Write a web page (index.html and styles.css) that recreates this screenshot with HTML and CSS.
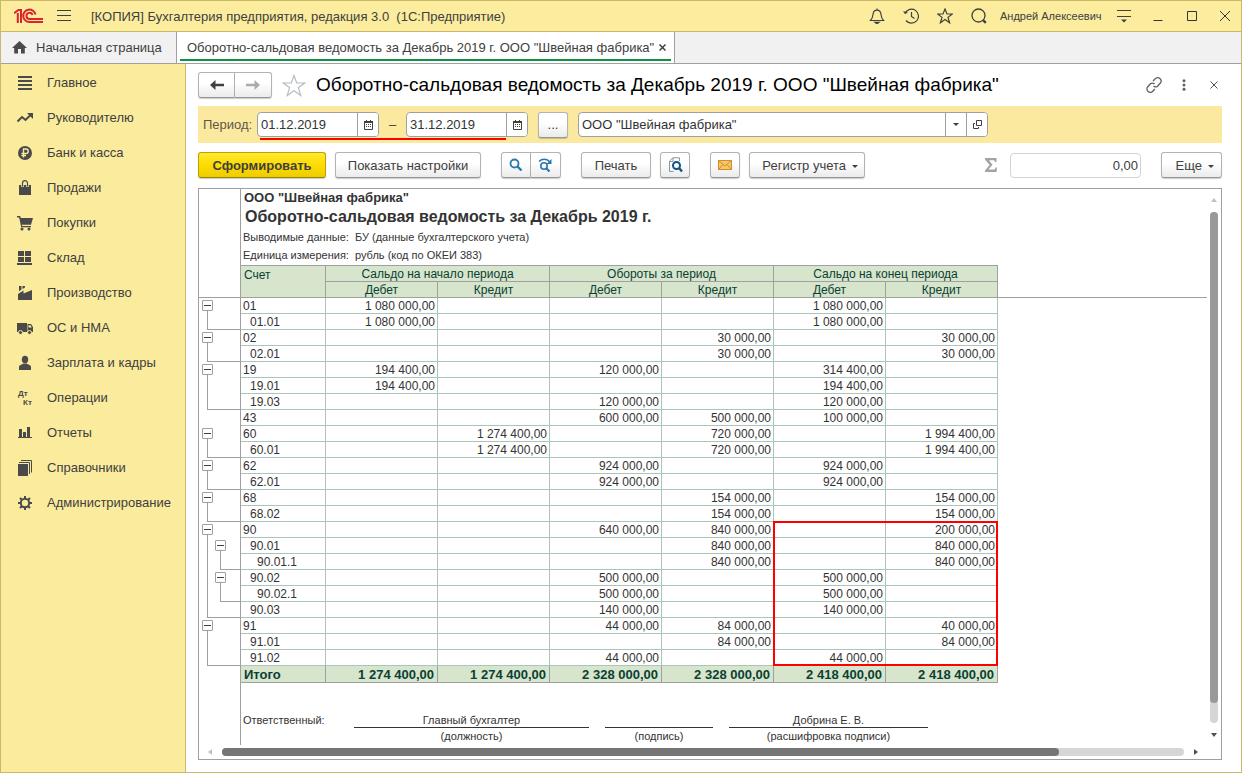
FILE: index.html
```html
<!DOCTYPE html>
<html lang="ru">
<head>
    <meta charset="UTF-8">
    <meta name="viewport" content="width=device-width, initial-scale=1.0">
    <title>Оборотно-сальдовая ведомость</title>
    <link rel="stylesheet" href="styles.css">
</head>
<body>
<div class="window">

    <header class="titlebar">
        <svg class="logo" width="30" height="16" viewBox="0 0 30 16" fill="none" stroke="#d9232e" stroke-width="2">
            <path d="M0 5.200 4.500 2H7V15M3.800 5V15"/>
            <path d="M21.500 6.500A6.200 6.200 0 1 0 15.500 14H29"/>
            <path d="M18.500 7A3.100 3.100 0 1 0 15.500 11H29"/>
        </svg>
        <button class="icon-btn menu-btn" aria-label="Меню">
            <svg width="14" height="12" viewBox="0 0 14 12" stroke="#404040"><path d="M0 .5H14M0 5.500H14M0 10.500H14"/></svg>
        </button>
        <span class="app-title">[КОПИЯ] Бухгалтерия предприятия, редакция 3.0&nbsp; (1С:Предприятие)</span>
        <div class="title-tools">
            <button class="icon-btn" aria-label="Уведомления">
                <svg width="16" height="16" viewBox="0 0 16 16" fill="none" stroke="#404040" stroke-width="1.2"><path d="M8 .5V2M1.5 12.5H14.5C12.5 10.5 12.3 9 12 6.500C11.700 3.500 10 2.200 8 2.200S4.300 3.500 4 6.500C3.700 9 3.500 10.500 1.500 12.500Z"/><path d="M6 14.300H10L8 15.800Z" fill="#404040"/></svg>
            </button>
            <button class="icon-btn" aria-label="История">
                <svg width="16" height="16" viewBox="0 0 16 16" fill="none" stroke="#404040" stroke-width="1.2"><path d="M2.200 5A7 7 0 1 1 3 12.500M8.500 4V8.500L11.500 10.500"/><path d="M0 3.200 2.200 6.300 5 4Z" fill="#404040" stroke="none"/></svg>
            </button>
            <button class="icon-btn" aria-label="Избранное">
                <svg width="16" height="16" viewBox="0 0 16 16" fill="none" stroke="#404040" stroke-width="1.200"><path d="M8 1 10 6H15.300L11 9.400 12.600 14.800 8 11.600 3.400 14.800 5 9.400 .700 6H6Z"/></svg>
            </button>
            <button class="icon-btn" aria-label="Поиск">
                <svg width="16" height="16" viewBox="0 0 16 16" fill="none" stroke="#404040" stroke-width="1.300"><circle cx="7.500" cy="7.500" r="6.500"/><path d="M12 12 14.800 14.800" stroke-width="2.400"/></svg>
            </button>
            <a class="user" href="#">Андрей Алексеевич</a>
            <button class="icon-btn" aria-label="Сервис">
                <svg width="14" height="13" viewBox="0 0 14 13"><path d="M0 .5H14M0 6.500H14" stroke="#404040"/><path d="M4 9.500H10L7 12.500Z" fill="#404040"/></svg>
            </button>
            <button class="icon-btn" aria-label="Свернуть">
                <svg width="10" height="10" viewBox="0 0 10 10" stroke="#333"><path d="M.5 9.500H9.500"/></svg>
            </button>
            <button class="icon-btn" aria-label="Развернуть">
                <svg width="10" height="10" viewBox="0 0 10 10" fill="none" stroke="#333"><path d="M.5 .5H9.500V9.500H.5Z"/></svg>
            </button>
            <button class="icon-btn close-window" aria-label="Закрыть">
                <svg width="10" height="10" viewBox="0 0 10 10" stroke="#333"><path d="M0 0 10 10M10 0 0 10"/></svg>
            </button>
        </div>
    </header>

    <nav class="tabs">
        <a class="tab home" href="#">
            <svg width="15" height="13" viewBox="0 0 15 13" fill="#4a4a4a"><path d="M7.500 0 15 7H12.800V12.500H9V8H6V12.500H2.200V7H0Z"/></svg>
            Начальная страница
        </a>
        <div class="tab active">
            <a href="#">Оборотно-сальдовая ведомость за Декабрь 2019 г. ООО "Швейная фабрика"</a>
            <button class="icon-btn" aria-label="Закрыть вкладку">
                <svg width="7" height="7" viewBox="0 0 7 7" stroke="#404040" stroke-width="1.500"><path d="M.5 .5 6.500 6.500M6.500 .5 .5 6.500"/></svg>
            </button>
        </div>
    </nav>

    <div class="workspace">
        <nav class="sidebar">
            <a href="#"><svg viewBox="0 0 16 16"><path d="M1 1H15V3H1ZM1 5H15V7H1ZM1 9H15V11H1ZM1 13H15V15H1Z"/></svg>Главное</a>
            <a href="#"><svg viewBox="0 0 16 16"><path d="M.5 11.500 5 7 8.500 10 13.500 5" fill="none" stroke="#4a4a4a" stroke-width="2"/><path d="M10 3H16V9Z"/></svg>Руководителю</a>
            <a href="#"><svg viewBox="0 0 16 16"><circle cx="8" cy="8" r="7"/><path d="M6.500 12.500V4H9A2.200 2.200 0 0 1 9 8.500H4.500M4.500 10.500H9" fill="none" stroke="#faeb9d" stroke-width="1.400"/></svg>Банк и касса</a>
            <a href="#"><svg viewBox="0 0 16 16"><path d="M2 5H14V15H2Z"/><path d="M5.500 7V3.500A2.500 2.500 0 0 1 10.500 3.500V7" fill="none" stroke="#faeb9d" stroke-width="2.600"/><path d="M5.500 6.500V3.200A2.500 2.500 0 0 1 10.500 3.200V6.500" fill="none" stroke="#4a4a4a" stroke-width="1.200"/></svg>Продажи</a>
            <a href="#"><svg viewBox="0 0 16 16"><path d="M0 1H3.200L3.800 3H16L14 9.800H4.800L5.200 11H14V12.200H4.200L2.200 2.400H0Z"/><circle cx="5" cy="14" r="1.500"/><circle cx="12" cy="14" r="1.500"/></svg>Покупки</a>
            <a href="#"><svg viewBox="0 0 16 16"><path d="M1 1H7V6H1ZM8 1H14V6H8ZM1 7H7V12H1ZM8 7H14V12H8ZM0 13H15V15H0Z"/></svg>Склад</a>
            <a href="#"><svg viewBox="0 0 16 16"><path d="M1 15V9L6.500 5.500V8.500L15 5V15ZM2 1H4.500V4.500L2 6.200ZM5.500 1H8V2.500L5.500 4Z"/></svg>Производство</a>
            <a href="#"><svg viewBox="0 0 16 16"><path d="M0 3H10V12H0ZM10.500 4H14L16 7V12H10.500Z"/><path d="M11.500 5.200H13.500L14.800 7.500H11.500Z" fill="#faeb9d"/><g stroke="#faeb9d"><circle cx="3.500" cy="12.500" r="2"/><circle cx="12.500" cy="12.500" r="2"/></g></svg>ОС и НМА</a>
            <a href="#"><svg viewBox="0 0 16 16"><ellipse cx="8" cy="4.500" rx="3.200" ry="3.800"/><path d="M2 15V12C2 10 5 9.500 6.500 8.500H9.500C11 9.500 14 10 14 12V15Z"/></svg>Зарплата и кадры</a>
            <a href="#"><svg viewBox="0 0 16 16" class="dtkt"><text x="1" y="6">Дт</text><text x="6" y="15">Кт</text></svg>Операции</a>
            <a href="#"><svg viewBox="0 0 16 16"><path d="M2 4H5V12H2ZM6 7H9V12H6ZM10 2H13V12H10ZM1 12H15V13H1Z"/></svg>Отчеты</a>
            <a href="#"><svg viewBox="0 0 16 16"><path d="M1 4H11V16H1Z"/><path d="M2 2.500H12.500V14M4 .5H14.500V12.500" fill="none" stroke="#4a4a4a"/></svg>Справочники</a>
            <a href="#"><svg viewBox="0 0 16 16" stroke="#4a4a4a"><circle cx="8" cy="8" r="4.200" fill="none" stroke-width="2"/><path d="M8 1V3.500M8 12.500V15M1 8H3.500M12.500 8H15M3 3 4.800 4.800M11.200 11.200 13 13M3 13 4.800 11.200M11.200 4.800 13 3" fill="none" stroke-width="2"/></svg>Администрирование</a>
        </nav>

        <main class="content">
            <div class="page-head">
                <div class="btn-group nav-group">
                    <button class="btn" aria-label="Назад"><svg width="14" height="10" viewBox="0 0 14 10"><path d="M0 5 5.500 0V3.800H14V6.200H5.500V10Z" fill="#404040"/></svg></button>
                    <button class="btn" aria-label="Вперед"><svg width="14" height="10" viewBox="0 0 14 10"><path d="M14 5 8.500 0V3.800H0V6.200H8.500V10Z" fill="#ababab"/></svg></button>
                </div>
                <button class="icon-btn fav" aria-label="В избранное">
                    <svg width="24" height="23" viewBox="0 0 24 23" fill="none" stroke="#b5bcc2" stroke-width="1.200"><path d="M12 1.500 14.700 9H22.800L16.400 13.600 18.800 21.500 12 16.700 5.200 21.500 7.600 13.600 1.200 9H9.300Z"/></svg>
                </button>
                <h1>Оборотно-сальдовая ведомость за Декабрь 2019 г. ООО "Швейная фабрика"</h1>
                <div class="head-tools">
                    <button class="icon-btn" aria-label="Ссылка">
                        <svg width="16" height="16" viewBox="0 0 16 16" fill="none" stroke="#606060" stroke-width="1.300"><path d="M7 4 9.200 1.800A3 3 0 0 1 14.200 6.200L11.500 9.200C10.500 10.200 8.500 10.200 7.500 9M9 12 6.800 14.200A3 3 0 0 1 1.800 9.800L4.500 6.800C5.500 5.800 7.500 5.800 8.500 7"/></svg>
                    </button>
                    <button class="icon-btn" aria-label="Еще">
                        <svg width="4" height="12" viewBox="0 0 4 12" fill="#606060"><circle cx="2" cy="1.700" r="1.500"/><circle cx="2" cy="6" r="1.500"/><circle cx="2" cy="10.300" r="1.500"/></svg>
                    </button>
                    <button class="icon-btn" aria-label="Закрыть">
                        <svg width="8" height="8" viewBox="0 0 8 8" stroke="#505050"><path d="M.5 .5 7.500 7.500M7.500 .5 .5 7.500"/></svg>
                    </button>
                </div>
            </div>

            <div class="filter">
                <label for="dateFrom">Период:</label>
                <div class="period">
                    <div class="field date">
                        <input id="dateFrom" type="text" value="01.12.2019">
                        <button aria-label="Календарь"><svg width="9" height="10" viewBox="0 0 9 10"><path d="M.5 1.500H8.500V9.500H.5Z" fill="none" stroke="#404040"/><path d="M0 1H9V3H0ZM2 0H3V1H2ZM6 0H7V1H6ZM2 4H3V5H2ZM4 4H5V5H4ZM6 4H7V5H6ZM2 6H3V7H2ZM4 6H5V7H4ZM6 6H7V7H6Z" fill="#404040"/></svg></button>
                    </div>
                    <span class="dash">–</span>
                    <div class="field date">
                        <input id="dateTo" type="text" value="31.12.2019" aria-label="Конец периода">
                        <button aria-label="Календарь"><svg width="9" height="10" viewBox="0 0 9 10"><path d="M.5 1.500H8.500V9.500H.5Z" fill="none" stroke="#404040"/><path d="M0 1H9V3H0ZM2 0H3V1H2ZM6 0H7V1H6ZM2 4H3V5H2ZM4 4H5V5H4ZM6 4H7V5H6ZM2 6H3V7H2ZM4 6H5V7H4ZM6 6H7V7H6Z" fill="#404040"/></svg></button>
                    </div>
                    <span class="underline"></span>
                </div>
                <button class="btn square">...</button>
                <div class="field org">
                    <input type="text" value='ООО "Швейная фабрика"' aria-label="Организация">
                    <button aria-label="Выбрать"><svg width="6" height="3" viewBox="0 0 6 3"><path d="M0 0H6L3 3Z" fill="#404040"/></svg></button>
                    <button aria-label="Открыть"><svg width="9" height="9" viewBox="0 0 9 9" fill="none" stroke="#404040"><path d="M3.500 .5H8.500V5.500H3.500ZM2 3.500H.5V8.500H5.500V7"/></svg></button>
                </div>
            </div>

            <div class="toolbar">
                <div class="group">
                    <button class="btn primary">Сформировать</button>
                    <button class="btn settings">Показать настройки</button>
                </div>
                <div class="btn-group">
                    <button class="btn square" aria-label="Найти"><svg width="14" height="14" viewBox="0 0 14 14" fill="none" stroke="#2a78ad" stroke-width="1.800"><circle cx="5.500" cy="5.500" r="4"/><path d="M8.500 8.500 12.500 12.500" stroke-width="2.400"/></svg></button>
                    <button class="btn square" aria-label="Найти далее"><svg width="15" height="15" viewBox="0 0 15 15" fill="none" stroke="#2a78ad" stroke-width="1.600"><circle cx="6" cy="8" r="3.200"/><path d="M8.500 10.500 11.500 13.500" stroke-width="2.200"/><path d="M1 3.500C4 .5 8.500 .5 11.500 3.500"/><path d="M13.500 1V6H8.500Z" fill="#2a78ad" stroke="none"/></svg></button>
                </div>
                <div class="group">
                    <button class="btn print">Печать</button>
                    <button class="btn square" aria-label="Предварительный просмотр"><svg width="15" height="16" viewBox="0 0 15 16" fill="none"><path d="M5.500 14.500H1.500V4L5 .8H11.500V4M1.500 4.500H5V1" stroke="#8796a3"/><circle cx="8.500" cy="8.500" r="3.500" fill="#fff" stroke="#0f5383" stroke-width="2"/><path d="M11 11 14 14.500" stroke="#0f5383" stroke-width="2.400"/></svg></button>
                </div>
                <div class="group">
                    <button class="btn square" aria-label="Отправить"><svg width="14" height="10" viewBox="0 0 14 10" fill="#f5c66a" stroke="#cf8f25"><path d="M.5 .5H13.500V9.500H.5Z"/><path d="M.5 .5 7 6 13.500 .5M.5 9.500 5 4.500M13.500 9.500 9 4.500" fill="none"/></svg></button>
                    <button class="btn register">Регистр учета <i class="caret"></i></button>
                </div>
                <div class="group sum">
                    <svg width="12" height="14" viewBox="0 0 12 14" fill="#a3a3a3"><path d="M0 0H11.500V4H10C9.800 2.600 9.500 2.200 8 2.200H4L7.500 6.700 3.500 11.600H8.500C10 11.600 10.300 11 10.500 9.500H12L11.500 14H0V12.500L4.600 7 0 1.500Z"/></svg>
                    <input type="text" value="0,00" aria-label="Сумма" readonly>
                </div>
                <button class="btn more">Еще <i class="caret"></i></button>
            </div>

            <section class="report">
                <div class="sheet">
                    <table>
                        <colgroup><col class="c-tree"><col class="c-acc"><col class="c-num" span="6"><col></colgroup>
                        <thead>
                            <tr class="titles">
                                <td class="tree"></td>
                                <td colspan="8">
                                    <div class="firm">ООО "Швейная фабрика"</div>
                                    <h2>Оборотно-сальдовая ведомость за Декабрь 2019 г.</h2>
                                    <dl>
                                        <dt>Выводимые данные:</dt><dd>БУ (данные бухгалтерского учета)</dd>
                                        <dt>Единица измерения:</dt><dd>рубль (код по ОКЕИ 383)</dd>
                                    </dl>
                                </td>
                            </tr>
                            <tr class="top">
                                <td class="tree"></td>
                                <th rowspan="2" class="acc">Счет</th>
                                <th colspan="2">Сальдо на начало периода</th>
                                <th colspan="2">Обороты за период</th>
                                <th colspan="2">Сальдо на конец периода</th>
                                <td class="rest"></td>
                            </tr>
                            <tr class="sub">
                                <td class="tree"></td>
                                <th>Дебет</th><th>Кредит</th><th>Дебет</th><th>Кредит</th><th>Дебет</th><th>Кредит</th>
                                <td class="rest"></td>
                            </tr>
                        </thead>
                        <tbody>
                            <tr><td class="tree open"><button aria-label="Свернуть"></button></td><td>01</td><td>1 080 000,00</td><td></td><td></td><td></td><td>1 080 000,00</td><td></td></tr>
                            <tr><td class="tree end"></td><td class="l1">01.01</td><td>1 080 000,00</td><td></td><td></td><td></td><td>1 080 000,00</td><td></td></tr>
                            <tr><td class="tree open"><button aria-label="Свернуть"></button></td><td>02</td><td></td><td></td><td></td><td>30 000,00</td><td></td><td>30 000,00</td></tr>
                            <tr><td class="tree end"></td><td class="l1">02.01</td><td></td><td></td><td></td><td>30 000,00</td><td></td><td>30 000,00</td></tr>
                            <tr><td class="tree open"><button aria-label="Свернуть"></button></td><td>19</td><td>194 400,00</td><td></td><td>120 000,00</td><td></td><td>314 400,00</td><td></td></tr>
                            <tr><td class="tree line"></td><td class="l1">19.01</td><td>194 400,00</td><td></td><td></td><td></td><td>194 400,00</td><td></td></tr>
                            <tr><td class="tree end"></td><td class="l1">19.03</td><td></td><td></td><td>120 000,00</td><td></td><td>120 000,00</td><td></td></tr>
                            <tr><td class="tree"></td><td>43</td><td></td><td></td><td>600 000,00</td><td>500 000,00</td><td>100 000,00</td><td></td></tr>
                            <tr><td class="tree open"><button aria-label="Свернуть"></button></td><td>60</td><td></td><td>1 274 400,00</td><td></td><td>720 000,00</td><td></td><td>1 994 400,00</td></tr>
                            <tr><td class="tree end"></td><td class="l1">60.01</td><td></td><td>1 274 400,00</td><td></td><td>720 000,00</td><td></td><td>1 994 400,00</td></tr>
                            <tr><td class="tree open"><button aria-label="Свернуть"></button></td><td>62</td><td></td><td></td><td>924 000,00</td><td></td><td>924 000,00</td><td></td></tr>
                            <tr><td class="tree end"></td><td class="l1">62.01</td><td></td><td></td><td>924 000,00</td><td></td><td>924 000,00</td><td></td></tr>
                            <tr><td class="tree open"><button aria-label="Свернуть"></button></td><td>68</td><td></td><td></td><td></td><td>154 000,00</td><td></td><td>154 000,00</td></tr>
                            <tr><td class="tree end"></td><td class="l1">68.02</td><td></td><td></td><td></td><td>154 000,00</td><td></td><td>154 000,00</td></tr>
                            <tr><td class="tree open"><button aria-label="Свернуть"></button></td><td>90</td><td></td><td></td><td>640 000,00</td><td>840 000,00</td><td class="marked"><span class="mark"></span></td><td>200 000,00</td></tr>
                            <tr><td class="tree line inner"><button aria-label="Свернуть"></button></td><td class="l1">90.01</td><td></td><td></td><td></td><td>840 000,00</td><td></td><td>840 000,00</td></tr>
                            <tr><td class="tree line inner-end"></td><td class="l2">90.01.1</td><td></td><td></td><td></td><td>840 000,00</td><td></td><td>840 000,00</td></tr>
                            <tr><td class="tree line inner"><button aria-label="Свернуть"></button></td><td class="l1">90.02</td><td></td><td></td><td>500 000,00</td><td></td><td>500 000,00</td><td></td></tr>
                            <tr><td class="tree line inner-end"></td><td class="l2">90.02.1</td><td></td><td></td><td>500 000,00</td><td></td><td>500 000,00</td><td></td></tr>
                            <tr><td class="tree end"></td><td class="l1">90.03</td><td></td><td></td><td>140 000,00</td><td></td><td>140 000,00</td><td></td></tr>
                            <tr><td class="tree open"><button aria-label="Свернуть"></button></td><td>91</td><td></td><td></td><td>44 000,00</td><td>84 000,00</td><td></td><td>40 000,00</td></tr>
                            <tr><td class="tree line"></td><td class="l1">91.01</td><td></td><td></td><td></td><td>84 000,00</td><td></td><td>84 000,00</td></tr>
                            <tr><td class="tree end"></td><td class="l1">91.02</td><td></td><td></td><td>44 000,00</td><td></td><td>44 000,00</td><td></td></tr>
                        </tbody>
                        <tfoot>
                            <tr class="total"><td class="tree"></td><td>Итого</td><td>1 274 400,00</td><td>1 274 400,00</td><td>2 328 000,00</td><td>2 328 000,00</td><td>2 418 400,00</td><td>2 418 400,00</td></tr>
                            <tr class="signs">
                                <td class="tree"></td>
                                <td colspan="8">
                                    <div class="sign-row">
                                        <span class="sign-label">Ответственный:</span>
                                        <div class="sign post"><b>Главный бухгалтер</b><small>(должность)</small></div>
                                        <div class="sign hand"><b></b><small>(подпись)</small></div>
                                        <div class="sign name"><b>Добрина Е. В.</b><small>(расшифровка подписи)</small></div>
                                    </div>
                                </td>
                            </tr>
                        </tfoot>
                    </table>
                </div>
                <div class="vscroll"><i class="arrow up"></i><div class="track"><div class="thumb"></div></div><i class="arrow down"></i></div>
                <div class="hscroll"><i class="arrow left"></i><div class="track"><div class="thumb"></div></div><i class="arrow right"></i></div>
            </section>
        </main>
    </div>
</div>
</body>
</html>
```
FILE: styles.css
```css
:root {
    --yellow: #fbec9e;
    --gold: #c9b968;
    --line: #a0a0a0;
    --cell-line: #acc5bb;
    --text: #404040;
}
* {
    box-sizing: border-box;
}
body {
    margin: 0;
    font-family: "Liberation Sans", Arial, sans-serif;
    font-size: 13px;
    color: var(--text);
}
button, input {
    font: inherit;
    color: inherit;
}
a {
    color: inherit;
    text-decoration: none;
}
.window {
    display: flex;
    flex-direction: column;
    min-height: 100vh;
    border: 1px solid var(--gold);
    background: #fff;
}
.icon-btn {
    display: flex;
    align-items: center;
    justify-content: center;
    padding: 0;
    border: 0;
    background: none;
    cursor: pointer;
}

/* title bar */
.titlebar {
    display: flex;
    align-items: center;
    height: 31px;
    padding-left: 13px;
    background: var(--yellow);
    border-bottom: 1px solid var(--gold);
}
.menu-btn {
    margin: 0 20px 0 13px;
}
.title-tools {
    display: flex;
    align-items: center;
    margin-left: auto;
}
.title-tools .icon-btn {
    width: 34px;
    height: 30px;
}
.title-tools .close-window {
    width: 32px;
}
.user {
    width: 111px;
    padding-left: 4px;
    font-size: 11px;
    white-space: nowrap;
}

/* tabs */
.tabs {
    display: flex;
    height: 32px;
    background: #f1f1f1;
    border-bottom: 1px solid var(--line);
}
.tab {
    display: flex;
    align-items: center;
    border-right: 1px solid var(--line);
    white-space: nowrap;
}
.tab.home {
    width: 176px;
    gap: 9px;
    padding-left: 11px;
}
.tab.active {
    position: relative;
    width: 498px;
    padding: 0 8px 0 10px;
    justify-content: space-between;
    background: #fff;
}
.tab.active::after {
    content: "";
    position: absolute;
    left: 3px;
    right: 3px;
    bottom: 2px;
    height: 2px;
    background: #0f9246;
}

/* sidebar */
.workspace {
    display: flex;
    flex: 1;
}
.sidebar {
    flex: none;
    width: 185px;
    padding-top: 1px;
    background: #faeb9d;
    border-right: 1px solid var(--gold);
}
.sidebar a {
    display: flex;
    align-items: center;
    gap: 14px;
    height: 35px;
    padding-left: 16px;
}
.sidebar svg {
    width: 16px;
    height: 16px;
    fill: #4a4a4a;
}
.dtkt {
    overflow: visible;
    font-size: 8px;
    font-weight: bold;
}

/* page */
.content {
    display: flex;
    flex-direction: column;
    flex: 1;
    min-width: 0;
    padding: 8px 19px 12px 12px;
}
.page-head {
    display: flex;
    align-items: center;
    height: 26px;
}
h1 {
    margin: 0 0 0 10px;
    font-size: 19px;
    font-weight: normal;
    color: #000;
    white-space: nowrap;
}
.fav {
    margin-left: 10px;
}
.head-tools {
    display: flex;
    margin-left: auto;
}
.head-tools .icon-btn {
    width: 30px;
    height: 22px;
}
.head-tools .icon-btn:last-child {
    width: 16px;
    margin-left: 7px;
}
.head-tools .icon-btn:first-child {
    width: 30px;
}
.btn {
    height: 26px;
    padding: 0;
    border: 1px solid #b3b3b3;
    border-bottom-color: #969696;
    border-radius: 3px;
    background: linear-gradient(#fff 40%, #ebebeb);
    box-shadow: 0 1px 1px rgba(0, 0, 0, 0.2);
    white-space: nowrap;
    cursor: pointer;
}
.btn svg {
    display: block;
    margin: auto;
}
.btn-group {
    display: flex;
}
.btn-group .btn:first-child {
    border-radius: 3px 0 0 3px;
}
.btn-group .btn:last-child {
    border-left: 0;
    border-radius: 0 3px 3px 0;
}
.nav-group .btn {
    width: 37px;
}
.square {
    width: 30px;
}

/* filter band */
.filter {
    display: flex;
    align-items: center;
    height: 37px;
    margin-top: 8px;
    padding-left: 5px;
    background: #fce9a0;
}
.filter label {
    width: 54px;
    color: #5c574a;
}
.period {
    position: relative;
    display: flex;
    align-items: center;
    margin-right: 10px;
}
.dash {
    width: 27px;
    text-align: center;
}
.underline {
    position: absolute;
    left: 3px;
    right: 22px;
    bottom: -3px;
    height: 2px;
    background: #f00;
}
.field {
    display: flex;
    height: 25px;
    border: 1px solid var(--line);
    border-radius: 4px;
    background: #fff;
    overflow: hidden;
}
.field input {
    flex: 1;
    min-width: 0;
    padding: 0 3px;
    border: 0;
    background: none;
    outline: none;
    color: #333;
}
.field button {
    display: flex;
    align-items: center;
    justify-content: center;
    flex: none;
    width: 21px;
    padding: 0;
    border: 0;
    border-left: 1px solid var(--line);
    background: #fff;
    cursor: pointer;
}
.date {
    width: 122px;
}
.org {
    width: 410px;
    margin-left: 10px;
}

/* toolbar */
.toolbar {
    display: flex;
    gap: 20px;
    margin-top: 9px;
}
.group {
    display: flex;
    align-items: center;
    gap: 9px;
}
.primary {
    width: 128px;
    font-weight: bold;
    border-color: #bfa000;
    border-bottom-color: #9c8400;
    background: linear-gradient(#ffe935, #fddc00 50%, #efcc00);
}
.settings {
    width: 146px;
}
.print {
    width: 70px;
}
.register {
    width: 116px;
    padding-left: 6px;
}
.more {
    width: 61px;
    padding-left: 6px;
}
.caret {
    display: inline-block;
    margin-left: 2px;
    border: 3px solid transparent;
    border-top-color: #404040;
    border-bottom: 0;
    vertical-align: middle;
}
.sum {
    gap: 13px;
    margin-left: auto;
}
.sum input {
    width: 131px;
    height: 25px;
    padding: 0 2px;
    border: 1px solid #d3d3d3;
    border-radius: 4px;
    text-align: right;
    outline: none;
}

/* report */
.report {
    display: grid;
    grid-template-columns: 1fr 14px;
    grid-template-rows: 1fr 14px;
    flex: 1;
    margin-top: 10px;
    border: 1px solid var(--line);
}
.sheet {
    min-width: 0;
    overflow: hidden;
}
table {
    width: 100%;
    table-layout: fixed;
    border-spacing: 0;
    font-size: 12px;
    line-height: 13px;
    color: #333;
}
td, th {
    padding: 0;
}
.c-tree {
    width: 42px;
}
.c-acc {
    width: 85px;
}
.c-num {
    width: 112px;
}
.titles td {
    height: 76px;
    padding-left: 2px;
    vertical-align: top;
}
.firm {
    padding-left: 1px;
    font-size: 13px;
    font-weight: bold;
    line-height: 17px;
}
h2 {
    margin: 0;
    padding-left: 2px;
    font-size: 16px;
    line-height: 22px;
}
dl {
    display: grid;
    grid-template-columns: 112px 1fr;
    margin: 0;
    font-size: 11px;
    line-height: 18px;
}
dd {
    margin: 0;
}
th {
    height: 16px;
    padding-top: 2px;
    font-weight: normal;
    color: #0a4035;
    background: #d6e5cb;
    border-right: 1px solid var(--line);
    border-bottom: 1px solid var(--line);
}
.top th {
    height: 17px;
    border-top: 1px solid var(--line);
}
th.acc {
    padding: 3px 0 0 3px;
    text-align: left;
    vertical-align: top;
}
.sub .tree, .rest {
    border-bottom: 1px solid var(--line);
}
.top .rest {
    border-bottom: 0;
}
tbody td {
    height: 16px;
    text-align: right;
    padding: 2px 2px 0 0;
    border-right: 1px solid var(--cell-line);
    border-bottom: 1px solid var(--cell-line);
}
tbody td:nth-child(2) {
    padding-left: 2px;
    text-align: left;
}
tbody td.l1 {
    padding-left: 9px;
}
tbody td.l2 {
    padding-left: 16px;
}

/* grouping tree at the left of the sheet */
td.tree {
    padding: 0;
    border-right: 1px solid var(--line);
}
tbody td.tree {
    padding-top: 2px;
    vertical-align: top;
    border-bottom: 0;
    background-repeat: no-repeat;
    background-image: linear-gradient(var(--line), var(--line)), linear-gradient(var(--line), var(--line)), linear-gradient(var(--line), var(--line));
    background-size: 0 0;
}
tbody td.open {
    background-position: 8px 100%;
    background-size: 1px 4px, 0 0, 0 0;
}
tbody td.line {
    background-position: 8px 0;
    background-size: 1px 100%, 0 0, 0 0;
}
tbody td.end {
    background-position: 8px 0, 8px 100%;
    background-size: 1px 100%, 100% 1px, 0 0;
}
tbody td.inner {
    background-position: 8px 0, 21px 100%;
    background-size: 1px 100%, 1px 4px, 0 0;
}
tbody td.inner-end {
    background-position: 8px 0, 21px 0, 21px 100%;
    background-size: 1px 100%, 1px 100%, 100% 1px;
}
.tree button {
    display: block;
    width: 11px;
    height: 11px;
    margin-left: 3px;
    padding: 0;
    border: 1px solid var(--line);
    border-radius: 1px;
    background: linear-gradient(#404040, #404040) center / 7px 1px no-repeat #fff;
}
.inner button {
    margin-left: 16px;
}
.marked {
    position: relative;
}
.mark {
    position: absolute;
    top: -1px;
    left: -1px;
    width: 225px;
    height: 145px;
    border: 2px solid #f00;
}
.total td {
    height: 17px;
    padding: 0 3px;
    font-size: 13px;
    font-weight: bold;
    text-align: right;
    color: #0a4035;
    background: #d6e5cb;
    border-right: 1px solid var(--line);
    border-bottom: 1px solid var(--line);
}
.total td:nth-child(2) {
    text-align: left;
}
.total td.tree {
    background: none;
    border-bottom: 0;
}
.signs td {
    height: 62px;
    padding: 31px 0 0 2px;
    vertical-align: top;
    font-size: 11px;
}
.sign-row {
    display: flex;
    gap: 16px;
}
.sign-label {
    width: 95px;
}
.sign {
    display: flex;
    flex-direction: column;
    text-align: center;
}
.sign b {
    height: 14px;
    margin-bottom: 2px;
    font-weight: normal;
    border-bottom: 1px solid #333;
}
.sign small {
    font-size: 11px;
}
.post {
    width: 235px;
}
.hand {
    width: 108px;
}
.name {
    width: 199px;
}

/* scroll bars */
.vscroll, .hscroll {
    display: flex;
    align-items: center;
}
.vscroll {
    flex-direction: column;
    padding: 9px 0 8px;
}
.hscroll {
    padding: 0 9px;
}
.track {
    flex: 1;
    border-radius: 4px;
    background: #d6d6d6;
}
.vscroll .track {
    width: 8px;
    margin: 10px 0;
}
.hscroll .track {
    height: 8px;
    margin: 0 10px;
}
.thumb {
    border-radius: 4px;
}
.vscroll .thumb {
    height: 96%;
    background: #999;
}
.hscroll .thumb {
    width: 87%;
    height: 8px;
    background: #757575;
}
.arrow {
    border: 3px solid transparent;
}
.up {
    border-top: 0;
    border-bottom: 4px solid #c0c0c0;
}
.down {
    border-bottom: 0;
    border-top: 4px solid #505050;
}
.left {
    border-left: 0;
    border-right: 4px solid #c0c0c0;
}
.right {
    border-right: 0;
    border-left: 4px solid #505050;
}
```
